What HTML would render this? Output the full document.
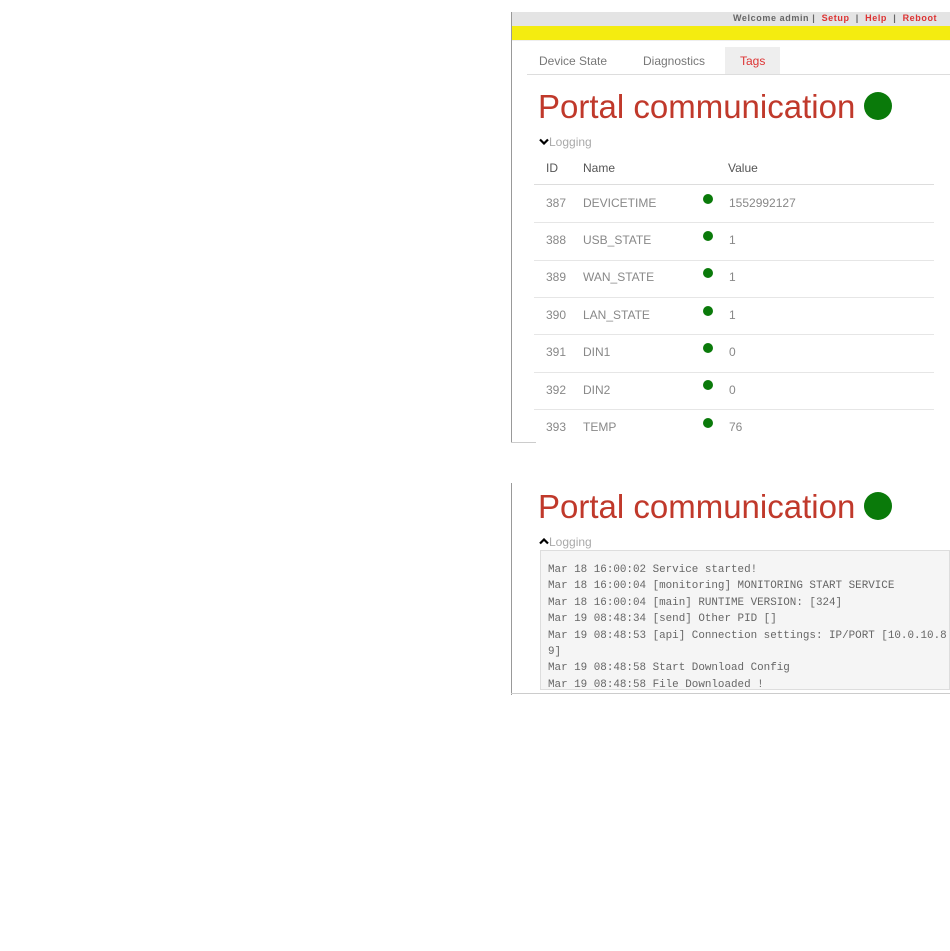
<!DOCTYPE html>
<html><head><meta charset="utf-8"><style>
*{margin:0;padding:0;box-sizing:border-box}
body{width:950px;height:951px;background:#fff;position:relative;overflow:hidden;font-family:"Liberation Sans",sans-serif}
.a{position:absolute;white-space:nowrap}
.t{color:#888;font-size:12px}
.dot{position:absolute;width:10px;height:10px;border-radius:50%;background:#0a7a0a}
.sep{position:absolute;left:534px;width:400px;height:1px;background:#e6e6e6}
.log{font-family:"Liberation Mono",monospace;font-size:10.9px;color:#666}
.title{font-size:33px;color:#c0392b}
</style></head><body>
<!-- panel 1 -->
<div class="a" style="left:511px;top:12px;width:1px;height:431px;background:#999"></div>
<div class="a" style="left:511px;top:442px;width:25px;height:1px;background:#ccc"></div>
<div class="a" style="left:512px;top:12px;width:438px;height:14px;background:#e4e4e4"></div>
<div class="a" style="left:733px;top:13px;font-size:9px;font-weight:bold;color:#666;letter-spacing:0.6px">Welcome admin | &nbsp;<span style="color:#d33">Setup</span> &nbsp;| &nbsp;<span style="color:#d33">Help</span> &nbsp;| &nbsp;<span style="color:#d33">Reboot</span></div>
<div class="a" style="left:512px;top:26px;width:438px;height:14px;background:#f4ec10"></div>
<div class="a" style="left:512px;top:40px;width:438px;height:1px;background:#eee"></div>
<div class="a" style="left:725px;top:47px;width:55px;height:27px;background:#eee"></div>
<div class="a t" style="left:539px;top:54px;color:#777">Device State</div>
<div class="a t" style="left:643px;top:54px;color:#777">Diagnostics</div>
<div class="a t" style="left:740px;top:54px;color:#d33">Tags</div>
<div class="a" style="left:527px;top:74px;width:423px;height:1px;background:#ddd"></div>
<div class="a title" style="left:538px;top:88px">Portal communication</div>
<div class="a" style="left:864px;top:92px;width:28px;height:28px;border-radius:50%;background:#0a7a0a"></div>
<svg class="a" style="left:539px;top:138px" width="10" height="7" viewBox="0 0 10 7"><path d="M1 1.5 L5 5.5 L9 1.5" stroke="#000" stroke-width="2.2" fill="none"/></svg>
<div class="a t" style="left:549px;top:135px;color:#aaa">Logging</div>
<div class="a t" style="left:546px;top:161px;color:#555">ID</div>
<div class="a t" style="left:583px;top:161px;color:#555">Name</div>
<div class="a t" style="left:728px;top:161px;color:#555">Value</div>
<div class="sep" style="top:184px;background:#ddd"></div>
<div class="a t" style="left:546px;top:196px">387</div><div class="a t" style="left:583px;top:196px">DEVICETIME</div><div class="dot" style="left:703px;top:194px"></div><div class="a t" style="left:729px;top:196px">1552992127</div>
<div class="sep" style="top:222px"></div>
<div class="a t" style="left:546px;top:233px">388</div><div class="a t" style="left:583px;top:233px">USB_STATE</div><div class="dot" style="left:703px;top:231px"></div><div class="a t" style="left:729px;top:233px">1</div>
<div class="sep" style="top:260px"></div>
<div class="a t" style="left:546px;top:270px">389</div><div class="a t" style="left:583px;top:270px">WAN_STATE</div><div class="dot" style="left:703px;top:268px"></div><div class="a t" style="left:729px;top:270px">1</div>
<div class="sep" style="top:297px"></div>
<div class="a t" style="left:546px;top:308px">390</div><div class="a t" style="left:583px;top:308px">LAN_STATE</div><div class="dot" style="left:703px;top:306px"></div><div class="a t" style="left:729px;top:308px">1</div>
<div class="sep" style="top:334px"></div>
<div class="a t" style="left:546px;top:345px">391</div><div class="a t" style="left:583px;top:345px">DIN1</div><div class="dot" style="left:703px;top:343px"></div><div class="a t" style="left:729px;top:345px">0</div>
<div class="sep" style="top:372px"></div>
<div class="a t" style="left:546px;top:383px">392</div><div class="a t" style="left:583px;top:383px">DIN2</div><div class="dot" style="left:703px;top:380px"></div><div class="a t" style="left:729px;top:383px">0</div>
<div class="sep" style="top:409px"></div>
<div class="a t" style="left:546px;top:420px">393</div><div class="a t" style="left:583px;top:420px">TEMP</div><div class="dot" style="left:703px;top:418px"></div><div class="a t" style="left:729px;top:420px">76</div>
<!-- panel 2 -->
<div class="a" style="left:511px;top:483px;width:1px;height:212px;background:#999"></div>
<div class="a" style="left:511px;top:693px;width:439px;height:1px;background:#ccc"></div>
<div class="a title" style="left:538px;top:488px">Portal communication</div>
<div class="a" style="left:864px;top:492px;width:28px;height:28px;border-radius:50%;background:#0a7a0a"></div>
<svg class="a" style="left:539px;top:538px" width="10" height="7" viewBox="0 0 10 7"><path d="M1 5.5 L5 1.5 L9 5.5" stroke="#000" stroke-width="2.2" fill="none"/></svg>
<div class="a t" style="left:549px;top:535px;color:#aaa">Logging</div>
<div class="a" style="left:540px;top:550px;width:410px;height:140px;background:#f5f5f5;border:1px solid #ddd;overflow:hidden">
<pre class="log" style="margin:11px 0 0 7px;line-height:16.4px">Mar 18 16:00:02 Service started!
Mar 18 16:00:04 [monitoring] MONITORING START SERVICE
Mar 18 16:00:04 [main] RUNTIME VERSION: [324]
Mar 19 08:48:34 [send] Other PID []
Mar 19 08:48:53 [api] Connection settings: IP/PORT [10.0.10.8
9]
Mar 19 08:48:58 Start Download Config
Mar 19 08:48:58 File Downloaded !</pre></div>
</body></html>
